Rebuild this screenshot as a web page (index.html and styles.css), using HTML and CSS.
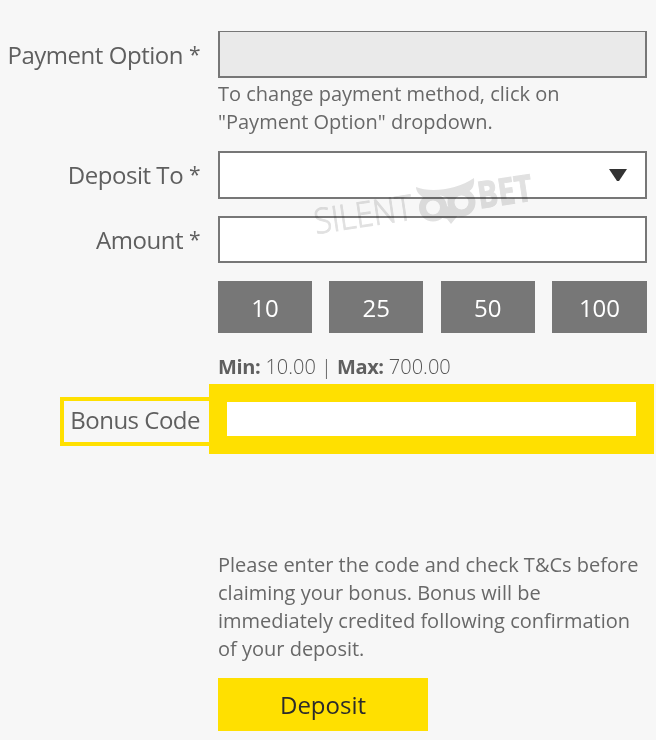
FILE: index.html
```html
<!DOCTYPE html>
<html lang="en">
<head>
<meta charset="utf-8">
<title>Deposit</title>
<link rel="stylesheet" href="styles.css">
</head>
<body>
<form class="form">
  <div class="row row-payment">
    <label class="label"><span>Payment Option <i>*</i></span></label>
    <div class="field field-disabled"></div>
  </div>
  <p class="hint">To change payment method, click on<br>"Payment Option" dropdown.</p>
  <div class="row row-to">
    <label class="label label-up"><span>Deposit To <i>*</i></span></label>
    <div class="field field-select"><svg class="arrow" viewBox="0 0 18 12"><path d="M0 0H18L10 12H8Z"/></svg></div>
  </div>
  <div class="row row-amount">
    <label class="label"><span>Amount <i>*</i></span></label>
    <div class="field"></div>
  </div>
  <div class="presets">
    <button type="button">10</button><button type="button">25</button><button type="button">50</button><button type="button">100</button>
  </div>
  <p class="limits"><b>Min:</b> 10.00 | <b>Max:</b> 700.00</p>
  <div class="bonus">
    <label class="bonus-label">Bonus Code</label>
    <div class="bonus-field"></div>
  </div>
  <p class="terms">Please enter the code and check T&amp;Cs before<br>claiming your bonus. Bonus will be<br>immediately credited following confirmation<br>of your deposit.</p>
  <button type="button" class="submit">Deposit</button>
</form>
<svg class="watermark" viewBox="300 160 250 90">
  <text class="silent" transform="translate(316 234) rotate(-8.5)" textLength="99" lengthAdjust="spacingAndGlyphs">SILENT</text>
  <path d="M416 187C430 193 457 190 474 178C475 187 471 191 466 193C458 191 453 197 451 202C445 194 434 193 424 198C419 195 416 191 416 187Z"/>
  <circle class="eye" cx="433" cy="207.500" r="10.500"/>
  <circle class="eye" cx="461.500" cy="202.500" r="10.500"/>
  <path d="M438 217L447 206L460 213L451 224L447 219Z"/>
  <text class="bet" transform="translate(479.500 208.500) rotate(-8.5)" textLength="55" lengthAdjust="spacingAndGlyphs">BET</text>
</svg>
</body>
</html>
```
FILE: styles.css
```css
* { box-sizing: border-box; }
body {
  margin: 0;
  width: 656px;
  height: 740px;
  overflow: hidden;
  background: #f7f7f7;
  color: #5f5f5f;
  font-family: "Open Sans", "Noto Sans", sans-serif;
}
p { margin: 0; }
.form { padding-top: 31px; }
.row { display: grid; grid-template-columns: 200px 429px; column-gap: 18px; }
.label { display: flex; justify-content: flex-end; align-items: center; font-size: 24px; letter-spacing: -0.46px; white-space: nowrap; }
.label i { font-style: normal; font-size: 21px; line-height: 1; vertical-align: 2px; }
.label-up { padding-bottom: 2px; }
.field { border: 2px solid #777; background: #fff; height: 47px; }
.field-disabled { background: #eaeaea; border-top-width: 1px; }
.hint, .limits, .terms { margin-left: 218px; font-size: 20px; line-height: 28px; white-space: nowrap; color: #686868; }
.hint { margin-top: 2px; }
.row-to { margin-top: 15px; }
.field-select { display: flex; justify-content: flex-end; align-items: center; height: 48px; padding-right: 18px; }
.arrow { width: 18px; height: 12px; fill: #333; }
.row-amount { margin-top: 17px; }
.presets { display: grid; grid-template-columns: 94px 94px 94px 95px; justify-content: space-between; width: 429px; margin: 18px 0 0 218px; }
button { border: 0; padding: 0; font-family: inherit; }
.presets button { height: 52px; background: #777; color: #fff; font-size: 24px; }
.limits { margin-top: 20px; font-weight: 300; color: #555; }
.limits b { font-weight: 700; letter-spacing: -0.4px; color: #5f5f5f; }
.bonus { display: flex; align-items: center; margin: 3px 0 0 60px; height: 70px; }
.bonus-label { width: 150px; height: 49px; margin-top: 4px; border: 4px solid #ffe000; border-right: 0; display: flex; align-items: center; justify-content: flex-end; padding: 0 10px 4px 0; font-size: 24px; letter-spacing: -0.5px; white-space: nowrap; }
.bonus-field { width: 445px; height: 70px; margin-left: -1px; background: #fff; border: 18px solid #ffe000; }
.terms { margin-top: 97px; }
.submit { display: block; margin: 15px 0 0 218px; width: 210px; height: 53px; background: #ffe000; color: #2b2b2b; font-size: 24px; }
.watermark { position: absolute; left: 300px; top: 160px; width: 250px; height: 90px; mix-blend-mode: multiply; fill: #e1e1e1; pointer-events: none; }
.silent { font-size: 35px; font-weight: 300; stroke: #e1e1e1; stroke-width: 0.9px; }
.bet { font-size: 37px; font-weight: 700; stroke: #e1e1e1; stroke-width: 1px; }
.eye { fill: none; stroke: #e1e1e1; stroke-width: 7px; }
```
